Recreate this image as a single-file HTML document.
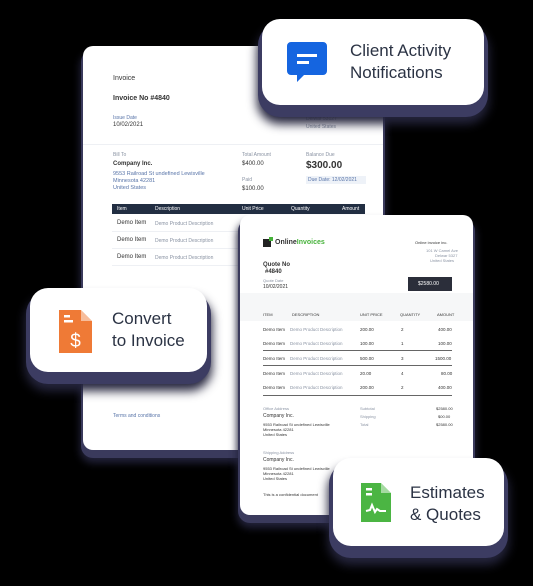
<!DOCTYPE html>
<html><head><meta charset="utf-8"><style>
*{margin:0;padding:0;box-sizing:border-box}
body{width:533px;height:586px;background:#000;position:relative;overflow:hidden;font-family:"Liberation Sans",sans-serif;color:#222b3a}
.a{position:absolute}
.card{position:absolute;background:#fff;border-radius:10px;box-shadow:0 6px 0 2px #3a3a5c,0 10px 8px 3px #22223a}
.pill{position:absolute;background:#fff;border-radius:18px;box-shadow:0 8px 0 4px #3c3c62,0 14px 10px 5px #25253d}
.t{position:absolute;white-space:nowrap;font-size:6px;color:#333}
.g{color:#8a93a3}
.b{color:#5874a8}
.big{position:absolute;font-size:17px;line-height:22px;color:#2b3344;white-space:nowrap}
</style></head><body>

<!-- invoice card -->
<div class="card" style="left:83px;top:46px;width:300px;height:404px">
 <div class="t" style="left:30px;top:29px;font-size:7px">Invoice</div>
 <div class="t" style="left:30px;top:49px;font-size:7px;font-weight:bold">Invoice No #4840</div>
 <div class="t b" style="left:30px;top:69px;font-size:5px">Issue Date</div>
 <div class="t" style="left:30px;top:76px">10/02/2021</div>
 <div class="t g" style="left:223px;top:61px;font-size:5px">5171 W Campell Ave</div>
 <div class="t g" style="left:223px;top:70px;font-size:5px">Delwar 53127</div>
 <div class="t g" style="left:223px;top:78px;font-size:5px">United States</div>
 <div class="a" style="left:0;top:98px;width:300px;height:1px;background:#eef0f4"></div>
 <div class="t g" style="left:30px;top:106px;font-size:5px">Bill To</div>
 <div class="t" style="left:30px;top:115px;font-weight:bold">Company Inc.</div>
 <div class="t b" style="left:30px;top:125px;font-size:5.5px">9553 Railroad St undefined Lewisville</div>
 <div class="t b" style="left:30px;top:132px;font-size:5.5px">Minnesota 42281</div>
 <div class="t b" style="left:30px;top:139px;font-size:5.5px">United States</div>
 <div class="t g" style="left:159px;top:106px;font-size:5px">Total Amount</div>
 <div class="t" style="left:159px;top:115px">$400.00</div>
 <div class="t g" style="left:159px;top:131px;font-size:5px">Paid</div>
 <div class="t" style="left:159px;top:140px">$100.00</div>
 <div class="t g" style="left:223px;top:106px;font-size:5px">Balance Due</div>
 <div class="t" style="left:223px;top:114px;font-size:10px;font-weight:bold">$300.00</div>
 <div class="a" style="left:223px;top:130px;width:60px;height:8px;background:#eef2f8"></div>
 <div class="t b" style="left:225px;top:131px;font-size:5px">Due Date: 12/02/2021</div>
 <div class="a" style="left:29px;top:158px;width:253px;height:10px;background:#222e42"></div>
 <div class="t" style="left:34px;top:160px;color:#fff;font-size:5px">Item</div>
 <div class="t" style="left:72px;top:160px;color:#fff;font-size:5px">Description</div>
 <div class="t" style="left:159px;top:160px;color:#fff;font-size:5px">Unit Price</div>
 <div class="t" style="left:208px;top:160px;color:#fff;font-size:5px">Quantity</div>
 <div class="t" style="left:259px;top:160px;color:#fff;font-size:5px">Amount</div>
 <div class="t" style="left:34px;top:174px">Demo Item</div><div class="t g" style="left:72px;top:175px;font-size:5px">Demo Product Description</div>
 <div class="a" style="left:29px;top:185px;width:253px;height:1px;background:#eef0f4"></div>
 <div class="t" style="left:34px;top:191px">Demo Item</div><div class="t g" style="left:72px;top:192px;font-size:5px">Demo Product Description</div>
 <div class="a" style="left:29px;top:202px;width:253px;height:1px;background:#eef0f4"></div>
 <div class="t" style="left:34px;top:208px">Demo Item</div><div class="t g" style="left:72px;top:209px;font-size:5px">Demo Product Description</div>
 <div class="a" style="left:29px;top:219px;width:253px;height:1px;background:#eef0f4"></div>
 <div class="t b" style="left:30px;top:367px;font-size:5px">Terms and conditions</div>
</div>

<!-- quote card -->
<div class="card" style="left:240px;top:215px;width:233px;height:300px">
 <div class="a" style="left:23px;top:24px;width:8px;height:8px;background:#222"></div>
 <div class="a" style="left:29px;top:22px;width:4px;height:4px;background:#46b23a"></div>
 <div class="t" style="left:35px;top:24px;font-size:7px;font-weight:bold">Online<span style="color:#46b23a">Invoices</span></div>
 <div class="t" style="left:175px;top:25px;font-size:4px">Online invoice inc.</div>
 <div class="t g" style="left:186px;top:33px;font-size:4px">101 W Camel Ave</div>
 <div class="t g" style="left:195px;top:38px;font-size:4px">Delwar 5327</div>
 <div class="t g" style="left:190px;top:43px;font-size:4px">United States</div>
 <div class="t" style="left:23px;top:47px;font-weight:bold">Quote No</div>
 <div class="t" style="left:25px;top:54px;font-weight:bold">#4840</div>
 <div class="t g" style="left:23px;top:63px;font-size:4px">Quote Date</div>
 <div class="t" style="left:23px;top:69px;font-size:5px">10/02/2021</div>
 <div class="a" style="left:168px;top:62px;width:44px;height:14px;background:#2b2e3a"></div>
 <div class="t" style="left:178px;top:66px;color:#fff;font-size:5px">$2580.00</div>
 <div class="a" style="left:0;top:78px;width:233px;height:28px;background:#f6f7f8"></div>
 <div class="t" style="left:23px;top:97px;font-size:4px">ITEM</div>
 <div class="t" style="left:52px;top:97px;font-size:4px">DESCRIPTION</div>
 <div class="t" style="left:120px;top:97px;font-size:4px">UNIT PRICE</div>
 <div class="t" style="left:160px;top:97px;font-size:4px">QUANTITY</div>
 <div class="t" style="left:197px;top:97px;font-size:4px">AMOUNT</div>
 <div class="t" style="left:23px;top:112px;font-size:4.5px">Demo Item&nbsp;&nbsp;&nbsp;&nbsp;<span class="g">Demo Product Description</span></div><div class="t" style="left:120px;top:112px;font-size:4.5px">200.00</div><div class="t" style="left:161px;top:112px;font-size:4.5px">2</div><div class="t" style="left:198px;top:112px;font-size:4.5px">400.00</div>
 <div class="t" style="left:23px;top:126px;font-size:4.5px">Demo Item&nbsp;&nbsp;&nbsp;&nbsp;<span class="g">Demo Product Description</span></div><div class="t" style="left:120px;top:126px;font-size:4.5px">100.00</div><div class="t" style="left:161px;top:126px;font-size:4.5px">1</div><div class="t" style="left:198px;top:126px;font-size:4.5px">100.00</div>
 <div class="a" style="left:23px;top:135px;width:189px;height:1px;background:#666"></div>
 <div class="t" style="left:23px;top:141px;font-size:4.5px">Demo Item&nbsp;&nbsp;&nbsp;&nbsp;<span class="g">Demo Product Description</span></div><div class="t" style="left:120px;top:141px;font-size:4.5px">500.00</div><div class="t" style="left:161px;top:141px;font-size:4.5px">3</div><div class="t" style="left:195px;top:141px;font-size:4.5px">1500.00</div>
 <div class="a" style="left:23px;top:150px;width:189px;height:1px;background:#666"></div>
 <div class="t" style="left:23px;top:156px;font-size:4.5px">Demo Item&nbsp;&nbsp;&nbsp;&nbsp;<span class="g">Demo Product Description</span></div><div class="t" style="left:120px;top:156px;font-size:4.5px">20.00</div><div class="t" style="left:161px;top:156px;font-size:4.5px">4</div><div class="t" style="left:201px;top:156px;font-size:4.5px">80.00</div>
 <div class="t" style="left:23px;top:170px;font-size:4.5px">Demo Item&nbsp;&nbsp;&nbsp;&nbsp;<span class="g">Demo Product Description</span></div><div class="t" style="left:120px;top:170px;font-size:4.5px">200.00</div><div class="t" style="left:161px;top:170px;font-size:4.5px">2</div><div class="t" style="left:198px;top:170px;font-size:4.5px">400.00</div>
 <div class="a" style="left:23px;top:180px;width:189px;height:1px;background:#666"></div>
 <div class="t g" style="left:23px;top:191px;font-size:4px">Office Address</div>
 <div class="t" style="left:23px;top:198px;font-size:5px">Company Inc.</div>
 <div class="t" style="left:23px;top:207px;font-size:4px">9553 Railroad St undefined Lewisville<br>Minnesota 42281<br>United States</div>
 <div class="t g" style="left:120px;top:191px;font-size:4px">Subtotal</div><div class="t" style="left:196px;top:191px;font-size:4px">$2580.00</div>
 <div class="t g" style="left:120px;top:199px;font-size:4px">Shipping</div><div class="t" style="left:198px;top:199px;font-size:4px">$00.00</div>
 <div class="t g" style="left:120px;top:207px;font-size:4px">Total</div><div class="t" style="left:196px;top:207px;font-size:4px">$2580.00</div>
 <div class="t g" style="left:23px;top:235px;font-size:4px">Shipping Address</div>
 <div class="t" style="left:23px;top:242px;font-size:5px">Company Inc.</div>
 <div class="t" style="left:23px;top:251px;font-size:4px">9553 Railroad St undefined Lewisville<br>Minnesota 42281<br>United States</div>
 <div class="t" style="left:23px;top:277px;font-size:4px">This is a confidential document</div>
</div>

<!-- notification pill -->
<div class="pill" style="left:262px;top:19px;width:222px;height:86px">
 <svg class="a" style="left:25px;top:23px" width="40" height="40" viewBox="0 0 40 40"><path d="M4 0h32a4 4 0 0 1 4 4v25a4 4 0 0 1-4 4H17l-7 7v-7H4a4 4 0 0 1-4-4V4a4 4 0 0 1 4-4z" fill="#1565e0"/><rect x="10" y="12" width="20" height="3" fill="#fff"/><rect x="10" y="19" width="12" height="3" fill="#fff"/></svg>
 <div class="big" style="left:88px;top:21px">Client Activity<br>Notifications</div>
</div>

<!-- convert pill -->
<div class="pill" style="left:30px;top:288px;width:177px;height:84px">
 <svg class="a" style="left:29px;top:22px" width="33" height="43" viewBox="0 0 33 43"><path d="M0 0h22l11 11v32H0z" fill="#ef7a36"/><path d="M22 0v11h11" fill="#fff" opacity=".5"/><rect x="5" y="5" width="6" height="2.5" fill="#fff"/><rect x="5" y="10" width="9" height="2.5" fill="#fff"/><text x="16.5" y="37" font-size="19" font-family="Liberation Sans" fill="#fff" text-anchor="middle">$</text></svg>
 <div class="big" style="left:82px;top:20px">Convert<br>to Invoice</div>
</div>

<!-- estimates pill -->
<div class="pill" style="left:333px;top:458px;width:171px;height:88px">
 <svg class="a" style="left:28px;top:25px" width="30" height="39" viewBox="0 0 30 39"><path d="M0 0h20l10 10v29H0z" fill="#4bb543"/><path d="M20 0v10h10" fill="#fff" opacity=".5"/><rect x="5" y="5" width="6" height="2.5" fill="#fff"/><rect x="5" y="10" width="6" height="2.5" fill="#fff"/><path d="M5 28l4-1 2-5 3 7 2-3 3 2h6" stroke="#fff" stroke-width="2" fill="none"/></svg>
 <div class="big" style="left:77px;top:24px">Estimates<br>&amp; Quotes</div>
</div>
</body></html>
